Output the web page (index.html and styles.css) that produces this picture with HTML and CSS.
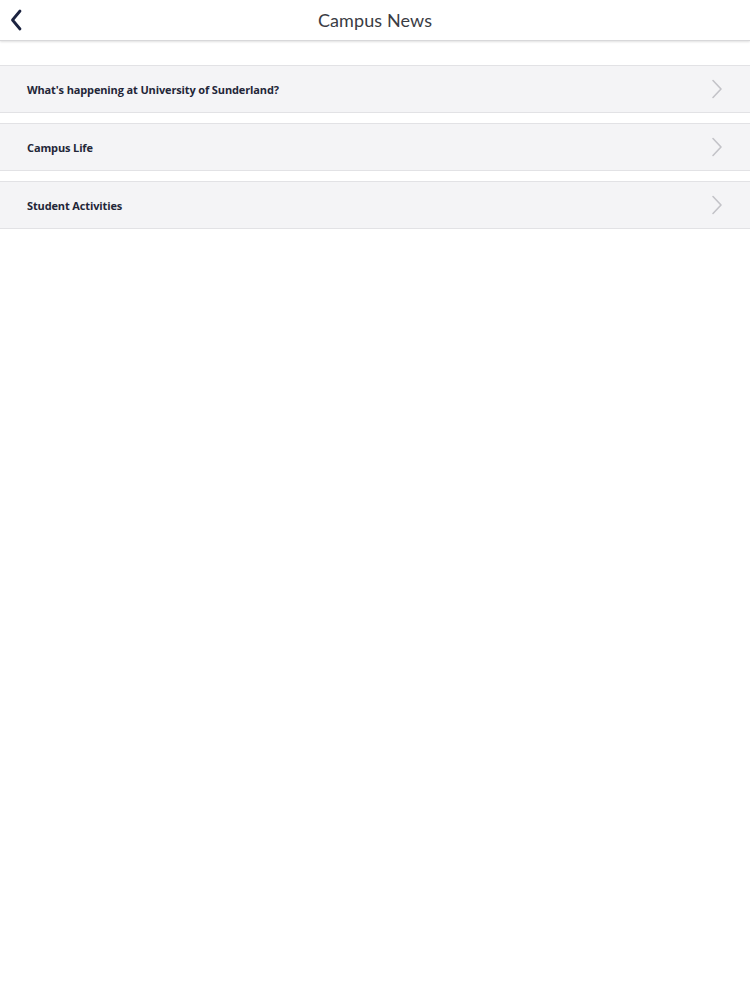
FILE: index.html
```html
<!DOCTYPE html>
<html>
<head>
<meta charset="utf-8">
<link rel="stylesheet" href="styles.css">
</head>
<body>
<header class="topbar">
  <button class="back" aria-label="Back">
    <svg width="14" height="22" viewBox="0 0 14 22"><path d="M11 2 L3.5 11 L11 20" fill="none" stroke="#1c2340" stroke-width="2.8" stroke-linecap="round" stroke-linejoin="round"/></svg>
  </button>
  <h1 class="title">Campus News</h1>
</header>
<main class="list">
  <a class="row"><span class="label">What's happening at University of Sunderland?</span><svg class="chev" width="12" height="20" viewBox="0 0 12 20"><path d="M2 1.5 L10 10 L2 18.5" fill="none" stroke="#c3c3c8" stroke-width="1.6" stroke-linecap="round" stroke-linejoin="round"/></svg></a>
  <a class="row"><span class="label">Campus Life</span><svg class="chev" width="12" height="20" viewBox="0 0 12 20"><path d="M2 1.5 L10 10 L2 18.5" fill="none" stroke="#c3c3c8" stroke-width="1.6" stroke-linecap="round" stroke-linejoin="round"/></svg></a>
  <a class="row"><span class="label">Student Activities</span><svg class="chev" width="12" height="20" viewBox="0 0 12 20"><path d="M2 1.5 L10 10 L2 18.5" fill="none" stroke="#c3c3c8" stroke-width="1.6" stroke-linecap="round" stroke-linejoin="round"/></svg></a>
</main>
</body>
</html>
```
FILE: styles.css
```css
html, body {
  margin: 0;
  padding: 0;
  background: #ffffff;
}
body {
  font-family: "Open Sans", "Liberation Sans", sans-serif;
}
.topbar {
  height: 40px;
  display: flex;
  align-items: center;
  justify-content: center;
  position: relative;
  background: #ffffff;
  border-bottom: 1px solid #d8d8da;
  box-shadow: 0 1px 2px rgba(0,0,0,0.12);
}
.back {
  position: absolute;
  left: 9px;
  top: 9px;
  padding: 0;
  border: 0;
  background: none;
  display: flex;
}
.title {
  margin: 0;
  font-family: "Lato", "Liberation Sans", sans-serif;
  font-weight: 400;
  font-size: 18px;
  color: #3a3c44;
  letter-spacing: 0.1px;
}
.list {
  padding-top: 24px;
  display: flex;
  flex-direction: column;
  gap: 10px;
}
.row {
  height: 46px;
  display: flex;
  align-items: center;
  justify-content: space-between;
  background: #f4f4f6;
  border-top: 1px solid #e2e2e5;
  border-bottom: 1px solid #e2e2e5;
  padding: 0 27px 0 27px;
}
.label {
  font-family: "Open Sans", sans-serif;
  font-weight: 700;
  font-size: 11px;
  letter-spacing: -0.13px;
  color: #232638;
}
.chev {
  display: block;
}
```
